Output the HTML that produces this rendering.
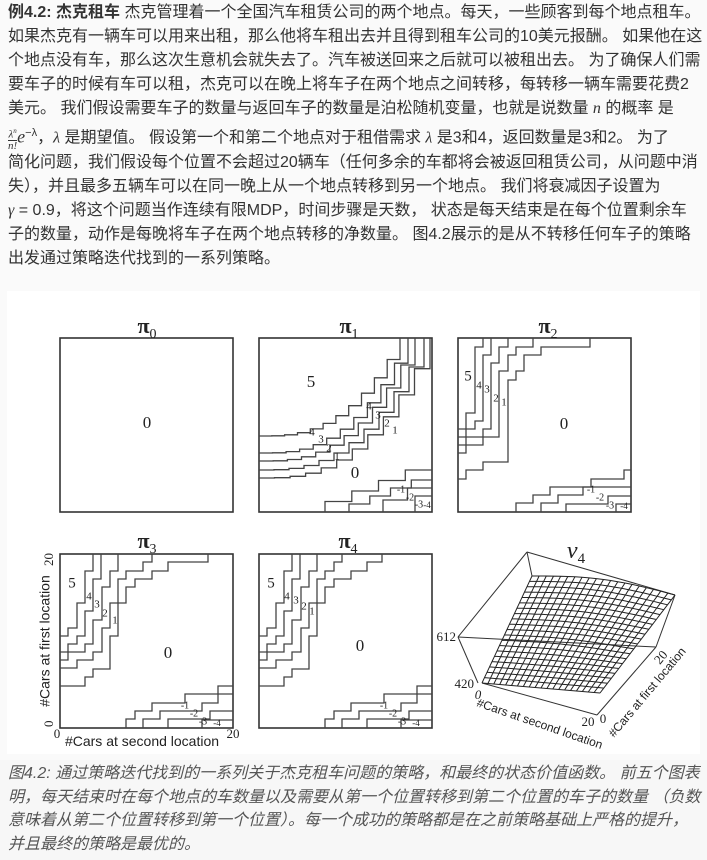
<!DOCTYPE html>
<html><head><meta charset="utf-8">
<style>
html,body{margin:0;padding:0;background:#fafafa;}
body{width:707px;height:860px;position:relative;overflow:hidden;font-family:"Liberation Sans","Noto Sans CJK SC",sans-serif;color:#333;}
.t{position:absolute;left:8px;top:1px;font-size:16px;line-height:24.1px;white-space:nowrap;}
.t b{font-weight:bold;}
.m{font-family:"Liberation Serif",serif;font-style:italic;}
.frac{display:inline-block;vertical-align:middle;font-size:11px;line-height:10px;text-align:center;font-family:"Liberation Serif",serif;font-style:italic;}
.frac span{display:block;}
.frac .n{border-bottom:1px solid #333;}
.fig{position:absolute;left:7px;top:291px;width:693px;height:463px;background:#fff;}
.cap{position:absolute;left:0;top:760px;width:707px;height:100px;background:#f7f7f7;}
.cap div{position:absolute;left:8px;top:2px;font-size:16px;line-height:23.5px;color:#555;font-style:italic;white-space:nowrap;font-family:"Liberation Sans","Noto Sans CJK SC",sans-serif;}
svg{position:absolute;left:0;top:0;}
</style></head><body>
<div class="t">
<div><b>例4.2: 杰克租车</b> 杰克管理着一个全国汽车租赁公司的两个地点。每天，一些顾客到每个地点租车。</div>
<div>如果杰克有一辆车可以用来出租，那么他将车租出去并且得到租车公司的10美元报酬。 如果他在这</div>
<div>个地点没有车，那么这次生意机会就失去了。汽车被送回来之后就可以被租出去。 为了确保人们需</div>
<div>要车子的时候有车可以租，杰克可以在晚上将车子在两个地点之间转移，每转移一辆车需要花费2</div>
<div>美元。 我们假设需要车子的数量与返回车子的数量是泊松随机变量，也就是说数量 <span class="m">n</span> 的概率 是</div>
<div><span class="frac"><span class="n">λ<sup style="font-size:7px">n</sup></span><span>n!</span></span><span class="m" style="font-size:18px">e</span><sup style="font-size:11px">−λ</sup>，<span class="m">λ</span> 是期望值。 假设第一个和第二个地点对于租借需求 <span class="m">λ</span> 是3和4，返回数量是3和2。 为了</div>
<div>简化问题，我们假设每个位置不会超过20辆车（任何多余的车都将会被返回租赁公司，从问题中消</div>
<div>失），并且最多五辆车可以在同一晚上从一个地点转移到另一个地点。 我们将衰减因子设置为</div>
<div><span class="m">γ</span> = 0.9，将这个问题当作连续有限MDP，时间步骤是天数， 状态是每天结束是在每个位置剩余车</div>
<div>子的数量，动作是每晚将车子在两个地点转移的净数量。 图4.2展示的是从不转移任何车子的策略</div>
<div>出发通过策略迭代找到的一系列策略。</div>
</div>
<div class="fig"></div>
<svg id="s" width="707" height="860" viewBox="0 0 707 860" font-family="Liberation Serif, serif" fill="#222"></svg>
<div class="cap"><div>
图4.2: 通过策略迭代找到的一系列关于杰克租车问题的策略，和最终的状态价值函数。 前五个图表<br>
明，每天结束时在每个地点的车数量以及需要从第一个位置转移到第二个位置的车子的数量 （负数<br>
意味着从第二个位置转移到第一个位置）。每一个成功的策略都是在之前策略基础上严格的提升，<br>
并且最终的策略是最优的。</div></div>
<script>
(function(){
var s=document.getElementById('s');var h='';
var W=173,H=174;
function box(x,y){h+='<rect x="'+x+'" y="'+y+'" width="'+W+'" height="'+H+'" fill="none" stroke="#333" stroke-width="1.6"/>';}
function topc(ox,oy,ly,tx,p,n){var d='M'+ox+' '+(oy+ly);for(var i=1;i<=n;i++){var t=i/n;var x=ox+tx*t;var y=oy+ly-ly*Math.pow(t,p);d+=' H'+x.toFixed(1)+' V'+y.toFixed(1);}h+='<path d="'+d+'" fill="none" stroke="#444" stroke-width="1.3"/>';}
function bot(ox,oy,bx,ry,n){var d='M'+(ox+bx)+' '+(oy+H);for(var i=1;i<=n;i++){var t=i/n;var x=ox+bx+(W-bx)*t;var y=oy+H-(H-ry)*t;d+=' V'+y.toFixed(1)+' H'+x.toFixed(1);}h+='<path d="'+d+'" fill="none" stroke="#444" stroke-width="1.3"/>';}
function paths(ox,oy,arr){h+='<g transform="translate('+ox+','+oy+')" fill="none" stroke="#444" stroke-width="1.3">';arr.forEach(function(d){h+='<path d="'+d+'"/>';});h+='</g>';}
function lab(ox,oy,x,y,t,fs){h+='<text x="'+(ox+x)+'" y="'+(oy+y)+'" font-size="'+(fs||15)+'" text-anchor="middle" dominant-baseline="middle">'+t+'</text>';}
function title(x,y,sub){h+='<text x="'+x+'" y="'+y+'" font-size="22" font-weight="bold" text-anchor="middle">π<tspan font-size="14" font-weight="normal" dy="5">'+sub+'</tspan></text>';}
box(60,338);lab(60,338,87,86,'0',17);title(147,333,'0');
var X=259,Y=338;box(X,Y);title(349,333,'1');
[[98,141],[115,149],[123,156],[132,165],[140,171]].forEach(function(c){topc(X,Y,c[0],c[1],2.6,11);});
[[66,132,4],[90,142,4],[124,150,2],[156,158,1]].forEach(function(c){bot(X,Y,c[0],c[1],c[2]);});
lab(X,Y,52,45,'5',17);lab(X,Y,110,69,'4',11);lab(X,Y,119,78,'3',11);lab(X,Y,128,86,'2',11);lab(X,Y,136,93,'1',11);
lab(X,Y,53,95,'4',11);lab(X,Y,62,102,'3',11);lab(X,Y,70,111,'2',11);lab(X,Y,78,119,'1',11);lab(X,Y,96,136,'0',17);
lab(X,Y,142,152,'-1',10);lab(X,Y,151,160,'-2',10);lab(X,Y,160,167,'-3',10);lab(X,Y,168,168,'-4',9);
// pi2
X=458;box(X,Y);title(548,333,'2');
paths(X,Y,['M0 91 H8 V75 H17 V9 H25 V0','M0 99 H8 V91 H17 V83 H25 V17 H33 V0','M0 107 H8 V99 H25 V91 H33 V25 H41 V9 H50 V0',
'M0 115 H8 V107 H25 V99 H41 V33 H50 V17 H58 V9 H75 V0','M0 141 H8 V132 H25 V124 H50 V42 H58 V33 H66 V17 H83 V9 H132 V0',
'M58 174 V165 H75 V157 H92 V149 H133 V141 H166 V132 H173','M83 174 V165 H100 V157 H125 V149 H173','M108 174 V166 H150 V158 H173','M158 174 V166 H173']);
lab(X,Y,10,39,'5',15);lab(X,Y,21,48,'4',11);lab(X,Y,29,52,'3',11);lab(X,Y,38,61,'2',11);lab(X,Y,46,65,'1',11);lab(X,Y,106,87,'0',17);
lab(X,Y,133,152,'-1',10);lab(X,Y,142,160,'-2',10);lab(X,Y,152,168,'-3',10);lab(X,Y,166,169,'-4',9);
// pi3 / pi4
var tp3=['M0 82 H8 V74 H17 V49 H25 V17 H33 V0','M0 98 H8 V90 H17 V82 H25 V57 H33 V25 H41 V0','M0 106 H8 V98 H25 V90 H33 V66 H42 V33 H50 V17 H58 V0',
'M0 114 H17 V106 H33 V98 H42 V74 H50 V49 H58 V25 H66 V17 H83 V8 H92 V0','M0 132 H25 V123 H33 V115 H50 V82 H58 V49 H66 V33 H75 V25 H92 V17 H108 V8 H148 V0'];
var bt=['M66 174 V165 H75 V157 H92 V149 H125 V140 H158 V132 H173','M83 174 V165 H100 V157 H142 V149 H158 V140 H173','M108 174 V165 H150 V157 H173','M142 174 V166 H173'];
X=60;Y=554;box(X,Y);title(147,548,'3');
paths(X,Y,tp3.concat(bt));
lab(X,Y,12,30,'5',15);lab(X,Y,29,43,'4',11);lab(X,Y,37,51,'3',11);lab(X,Y,45,60,'2',11);lab(X,Y,55,67,'1',11);lab(X,Y,108,100,'0',17);
lab(X,Y,125,152,'-1',10);lab(X,Y,134,160,'-2',10);lab(X,Y,143,168,'-3',10);lab(X,Y,157,170,'-4',9);
X=259;box(X,Y);title(348,548,'4');
var tp4=tp3.slice(0,3).concat(['M0 114 H17 V106 H33 V98 H42 V74 H50 V49 H58 V25 H66 V17 H75 V8 H83 V0','M0 132 H25 V123 H33 V115 H50 V82 H58 V49 H66 V33 H75 V25 H92 V17 H108 V8 H123 V0']);
paths(X,Y,tp4.concat(bt));
lab(X,Y,12,30,'5',15);lab(X,Y,28,43,'4',11);lab(X,Y,37,47,'3',11);lab(X,Y,45,53,'2',11);lab(X,Y,53,58,'1',11);lab(X,Y,101,93,'0',17);
lab(X,Y,125,152,'-1',10);lab(X,Y,134,160,'-2',10);lab(X,Y,143,168,'-3',10);lab(X,Y,157,170,'-4',9);
h+='<text transform="translate(50,553) rotate(-90)" font-size="13" text-anchor="end" dominant-baseline="middle">20</text>';
h+='<text transform="translate(50,727) rotate(-90)" font-size="13" text-anchor="start" dominant-baseline="middle">0</text>';
h+='<text transform="translate(46,641) rotate(-90)" font-family="Liberation Sans, sans-serif" font-size="14" text-anchor="middle" dominant-baseline="middle">#Cars at first location</text>';
h+='<text x="57" y="738" font-size="13" text-anchor="middle">0</text>';
h+='<text x="233" y="738" font-size="13" text-anchor="middle">20</text>';
h+='<text x="142" y="746" font-family="Liberation Sans, sans-serif" font-size="14" text-anchor="middle">#Cars at second location</text>';
function L(a,b,c,d,w){h+='<line x1="'+a+'" y1="'+b+'" x2="'+c+'" y2="'+d+'" stroke="#333" stroke-width="'+(w||1)+'"/>';}
L(458,637,527,552);L(527,552,675,595);L(458,637,656,647);L(656,647,675,595);L(458,637,478,683);L(482,683,597,715);L(597,715,656,647);L(527,552,532,576);
var A=[482,683],B=[532,576],C=[675,595],D=[600,693];
function P(u,v){var x=(1-u)*(1-v)*A[0]+u*(1-v)*D[0]+u*v*C[0]+(1-u)*v*B[0];var y=(1-u)*(1-v)*A[1]+u*(1-v)*D[1]+u*v*C[1]+(1-u)*v*B[1];y+=-6*Math.sin(Math.PI*u)*v;return x.toFixed(1)+' '+y.toFixed(1);}
var g='';for(var i=0;i<=20;i++){var u=i/20;g+='M'+P(u,0);for(var j=1;j<=20;j++)g+=' L'+P(u,j/20);g+='M'+P(0,u);for(j=1;j<=20;j++)g+=' L'+P(j/20,u);}
h+='<path d="'+g+'" fill="none" stroke="#222" stroke-width="1"/>';
h+='<text x="576" y="558" font-size="24" font-style="italic" text-anchor="middle">v<tspan font-size="15" font-style="normal" dy="5">4</tspan></text>';
h+='<text x="456" y="641" font-size="13" text-anchor="end">612</text>';
h+='<text x="474" y="688" font-size="13" text-anchor="end">420</text>';
h+='<text x="478" y="699" font-size="13" font-style="italic" text-anchor="middle">0</text>';
h+='<text transform="translate(476,706) rotate(19)" font-family="Liberation Sans, sans-serif" font-size="12">#Cars at second location</text>';
h+='<text x="588" y="726" font-size="13" text-anchor="middle">20</text>';
h+='<text x="603" y="723" font-size="13" text-anchor="middle">0</text>';
h+='<text transform="translate(614,738) rotate(-50)" font-family="Liberation Sans, sans-serif" font-size="12">#Cars at first location</text>';
h+='<text transform="translate(664,660) rotate(-50)" font-size="13" text-anchor="middle">20</text>';
s.innerHTML=h;
})();
</script>
</body></html>
